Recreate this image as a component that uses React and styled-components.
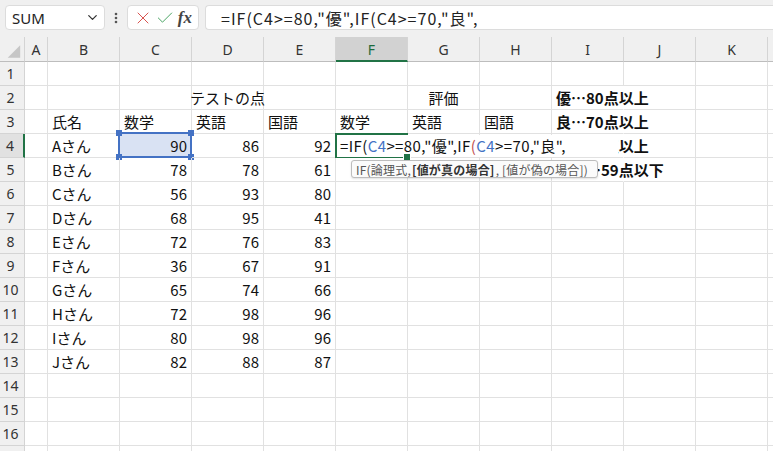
import React from 'react'
import styled, { createGlobalStyle } from 'styled-components'
import { X, Check, ChevronDown } from 'lucide-react'

const GlobalStyle = createGlobalStyle`
    html, body {
        margin: 0;
        padding: 0;
        background: #ffffff;
        overflow: hidden;
    }
    body {
        font-family: "Noto Sans CJK JP", "Noto Sans", sans-serif;
        color: #222;
    }
`

const COLS = ['A', 'B', 'C', 'D', 'E', 'F', 'G', 'H', 'I', 'J', 'K', '']

const DATA = [
    ['Aさん', 90, 86, 92],
    ['Bさん', 78, 78, 61],
    ['Cさん', 56, 93, 80],
    ['Dさん', 68, 95, 41],
    ['Eさん', 72, 76, 83],
    ['Fさん', 36, 67, 91],
    ['Gさん', 65, 74, 66],
    ['Hさん', 72, 98, 96],
    ['Iさん', 80, 98, 96],
    ['Jさん', 82, 88, 87],
]

// column I notes, by row number
const NOTES = {
    2: '優…80点以上',
    3: '良…70点以上',
    4: '可…60点以上',
    5: '不可…59点以下',
}

const buildRows = () => {
    const rows = []
    for (let r = 1; r <= 17; r++) {
        const cells = Array(12).fill(null)
        if (r === 2) {
            cells[3] = { text: 'テストの点', align: 'center' }
            cells[6] = { text: '評価', align: 'center' }
        }
        if (r === 3) {
            cells[1] = { text: '氏名' }
            cells[2] = { text: '数学' }
            cells[3] = { text: '英語' }
            cells[4] = { text: '国語' }
            cells[5] = { text: '数学' }
            cells[6] = { text: '英語' }
            cells[7] = { text: '国語' }
        }
        if (r >= 4 && r <= 13) {
            const d = DATA[r - 4]
            cells[1] = { text: d[0] }
            cells[2] = { text: d[1], align: 'right' }
            cells[3] = { text: d[2], align: 'right' }
            cells[4] = { text: d[3], align: 'right' }
        }
        if (NOTES[r]) {
            cells[8] = { text: NOTES[r], bold: true, spill: true }
        }
        rows.push(cells)
    }
    return rows
}

const App = () => {
    const rows = buildRows()

    return (
        <>
            <GlobalStyle />
            <Window>
                <Toolbar>
                    <NameBox>
                        <span>SUM</span>
                        <ChevronDown size={15} strokeWidth={2} color="#333" />
                    </NameBox>
                    <Dots>
                        <svg width="4" height="14" viewBox="0 0 4 14">
                            <circle cx="2" cy="3" r="1.3" fill="#555" />
                            <circle cx="2" cy="7" r="1.3" fill="#555" />
                            <circle cx="2" cy="11" r="1.3" fill="#555" />
                        </svg>
                    </Dots>
                    <ActionBox>
                        <X size={20} strokeWidth={1.2} color="#d9534f" />
                        <Check size={20} strokeWidth={1.2} color="#4aa564" />
                        <Fx>fx</Fx>
                    </ActionBox>
                    <FormulaInput>=IF(C4&gt;=80,"優",IF(C4&gt;=70,"良",</FormulaInput>
                </Toolbar>

                <Sheet>
                    <Corner>
                        <svg width="25" height="25" viewBox="0 0 25 25">
                            <polygon points="8,21 21,21 21,8" fill="#c6c6c6" />
                        </svg>
                    </Corner>
                    {COLS.map((c, i) => (
                        <ColHead key={'h' + i} $active={c === 'F'}>{c}</ColHead>
                    ))}

                    {rows.map((cells, ri) => {
                        const r = ri + 1
                        return (
                            <React.Fragment key={r}>
                                <RowHead $active={r === 4}>{r <= 16 ? r : ''}</RowHead>
                                {cells.map((cell, ci) => {
                                    const isRef = r === 4 && ci === 2
                                    const isActive = r === 4 && ci === 5
                                    return (
                                        <Cell
                                            key={ci}
                                            $align={cell?.align}
                                            $bold={cell?.bold}
                                            $spill={cell?.spill}
                                            $ref={isRef}
                                            $lift={isActive}
                                        >
                                            {cell?.text}
                                            {isRef && (
                                                <RefFrame>
                                                    <Handle $v="top" $h="left" />
                                                    <Handle $v="top" $h="right" />
                                                    <Handle $v="bottom" $h="left" />
                                                    <Handle $v="bottom" $h="right" />
                                                </RefFrame>
                                            )}
                                            {isActive && (
                                                <>
                                                    <ActiveFrame />
                                                    <EditText>
                                                        =IF(<RefTok>C4</RefTok>&gt;=80,"優",IF<Paren>(</Paren><RefTok>C4</RefTok>&gt;=70,"良",
                                                    </EditText>
                                                    <FillHandle />
                                                    <Tip>
                                                        IF(論理式, <b>[値が真の場合]</b>, [値が偽の場合])
                                                    </Tip>
                                                </>
                                            )}
                                        </Cell>
                                    )
                                })}
                            </React.Fragment>
                        )
                    })}
                </Sheet>
            </Window>
        </>
    )
}

export default App

const Window = styled.div`
    width: 773px;
    height: 451px;
    overflow: hidden;
    background: #ffffff;
`

const Toolbar = styled.div`
    display: flex;
    align-items: center;
    height: 37px;
    padding: 0 0 2px 5px;
    box-sizing: border-box;
    background: #f0f0f0;
`

const Box = styled.div`
    height: 25px;
    box-sizing: border-box;
    background: #ffffff;
    border: 1px solid #dcdcdc;
    border-radius: 4px;
    display: flex;
    align-items: center;
`

const NameBox = styled(Box)`
    width: 100px;
    padding: 0 4px 0 6px;
    justify-content: space-between;
    font-family: "Noto Sans", "Liberation Sans", sans-serif;
    font-size: 15px;
    color: #222;
`

const Dots = styled.div`
    width: 22px;
    display: flex;
    justify-content: center;
    align-items: center;
`

const ActionBox = styled(Box)`
    width: 72px;
    padding: 0 4px 0 5px;
    justify-content: space-between;
`

const Fx = styled.span`
    font-family: "Liberation Serif", "DejaVu Serif", serif;
    font-style: italic;
    font-size: 17px;
    font-weight: bold;
    color: #444;
    padding-right: 2px;
`

const FormulaInput = styled(Box)`
    flex: 1;
    margin-left: 6px;
    padding-left: 15px;
    border-right: none;
    border-radius: 4px 0 0 4px;
    font-family: "Noto Sans CJK JP", sans-serif;
    font-size: 16px;
    letter-spacing: 1px;
    color: #222;
    white-space: nowrap;
    overflow: hidden;
`

const Sheet = styled.div`
    display: grid;
    grid-template-columns: 25px 23px repeat(10, 72px) 30px;
    grid-template-rows: 25px;
    grid-auto-rows: 24px;
    background: #ffffff;
`

const Head = styled.div`
    background: ${p => (p.$active ? '#d2d2d2' : '#f0f0f0')};
    color: ${p => (p.$active ? '#1d6b3c' : '#333')};
    font-family: "Noto Sans", "Liberation Sans", sans-serif;
    font-size: 14px;
    display: flex;
    align-items: center;
    box-sizing: border-box;
`

const Corner = styled(Head)`
    border-right: 1px solid #d4d4d4;
    border-bottom: 1px solid #bdbdbd;
    padding: 0;
`

const ColHead = styled(Head)`
    justify-content: center;
    border-right: 1px solid #d4d4d4;
    border-bottom: ${p => (p.$active ? '2px solid #217346' : '1px solid #bdbdbd')};
    padding-top: ${p => (p.$active ? '1px' : '0')};
`

const RowHead = styled(Head)`
    justify-content: center;
    padding-right: 3px;
    color: #333;
    background: ${p => (p.$active ? '#e1e1e1' : '#f0f0f0')};
    border-bottom: 1px solid #d4d4d4;
    border-right: ${p => (p.$active ? '2px solid #217346' : '1px solid #d4d4d4')};
`

const Cell = styled.div`
    position: relative;
    z-index: ${p => (p.$lift ? 3 : 'auto')};
    display: flex;
    align-items: center;
    justify-content: ${p => (p.$align === 'right' ? 'flex-end' : p.$align === 'center' ? 'center' : 'flex-start')};
    padding: 1px 4px 0 4px;
    box-sizing: border-box;
    border-right: 1px solid ${p => (p.$spill ? 'transparent' : '#e1e1e1')};
    border-bottom: 1px solid #e1e1e1;
    background: ${p => (p.$ref ? '#d9e2f3' : 'transparent')};
    font-size: 15px;
    font-weight: ${p => (p.$bold ? 700 : 400)};
    white-space: nowrap;
    color: #111;
    line-height: 20px;
`

const RefFrame = styled.div`
    position: absolute;
    top: -2px;
    left: -2px;
    right: -1px;
    bottom: -1px;
    border: 2px solid #4472c4;
    pointer-events: none;
`

const Handle = styled.span`
    position: absolute;
    width: 6px;
    height: 6px;
    background: #4472c4;
    ${p => (p.$v === 'top' ? 'top: -4px;' : 'bottom: -4px;')}
    ${p => (p.$h === 'left' ? 'left: -4px;' : 'right: -4px;')}
`

const ActiveFrame = styled.div`
    position: absolute;
    top: -1px;
    left: -1px;
    right: -1px;
    bottom: -1px;
    border: 2px solid #217346;
`

const FillHandle = styled.span`
    position: absolute;
    right: -4px;
    bottom: -4px;
    width: 6px;
    height: 6px;
    background: #217346;
    border: 1px solid #ffffff;
`

const EditText = styled.div`
    position: absolute;
    top: 1px;
    left: 1px;
    width: 281px;
    height: 22px;
    padding-left: 3px;
    box-sizing: border-box;
    background: #ffffff;
    display: flex;
    align-items: center;
    font-size: 15px;
    letter-spacing: 0.4px;
    color: #111;
    white-space: pre;
`

const RefTok = styled.span`
    color: #4472c4;
`

const Paren = styled.span`
    color: #c0504d;
`

const Tip = styled.div`
    position: absolute;
    top: 26px;
    left: 15px;
    height: 18px;
    width: 247px;
    box-sizing: border-box;
    padding: 0 4px;
    background: #fbfbfb;
    border: 1px solid #bdbdbd;
    border-radius: 3px;
    box-shadow: 0 1px 2px rgba(0, 0, 0, 0.12);
    display: flex;
    align-items: center;
    font-size: 12px;
    letter-spacing: 0.2px;
    color: #555;
    white-space: nowrap;
    line-height: 15px;

    b {
        color: #333;
        font-weight: 700;
        margin: 0 1px;
    }
`
